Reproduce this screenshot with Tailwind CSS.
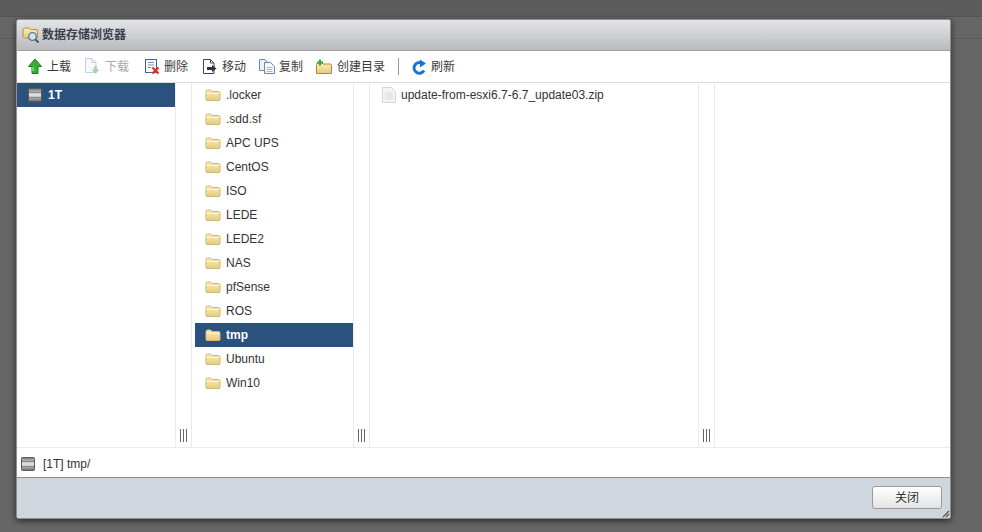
<!DOCTYPE html>
<html lang="en">
<head>
  <meta charset="UTF-8">
  <title>数据存储浏览器</title>
  <script src="https://cdn.jsdelivr.net/npm/@tailwindcss/browser@4"></script>
</head>
<body class="relative w-[982px] h-[532px] overflow-hidden bg-[#666666] font-['Liberation_Sans','Noto_Sans_CJK_SC',sans-serif] text-[12px] text-[#333333]">
  <svg width="0" height="0" class="absolute">
    <defs>
      <linearGradient id="fold" x1="0" y1="0" x2="0" y2="1"><stop offset="0" stop-color="#f8edbd"/><stop offset="1" stop-color="#e6cd7c"/></linearGradient>
      <linearGradient id="disk" x1="0" y1="0" x2="0" y2="1"><stop offset="0" stop-color="#7c7c7c"/><stop offset=".5" stop-color="#e6e6e6"/><stop offset="1" stop-color="#6a6a6a"/></linearGradient>
      <symbol id="folder" viewBox="0 0 16 16"><path d="M1 4.500Q1 3 2.500 3H5.500L7 4.500H13.500Q15 4.500 15 6V12.500Q15 13.500 14 13.500H2Q1 13.500 1 12.500Z" fill="url(#fold)" stroke="#d0b970"/><path d="M1.500 6.500H14.500" stroke="#fbf4d4"/></symbol>
      <symbol id="disk-icon" viewBox="0 0 14 14"><rect x=".5" y=".5" width="13" height="13" rx="1" fill="url(#disk)" stroke="#5a5a5a"/><path d="M1 4.500H13M1 9.500H13" stroke="#8a8a8a"/></symbol>
    </defs>
  </svg>

  <!-- page behind the dialog -->
  <div class="h-[17px] bg-[#5c5c5c] border-b border-[#555555]"></div>
  <div class="h-[22px] border-b border-[#5c5c5c]"></div>

  <div class="absolute left-[16px] top-[19px] w-[935px] h-[500px] flex flex-col border border-[#8f8f8f] rounded-[3px] bg-white shadow-[0_2px_6px_rgba(0,0,0,0.6)]">
    <!-- title -->
    <div class="h-[31px] shrink-0 flex items-center pl-[5px] gap-[2px] bg-gradient-to-b from-[#e4e5e8] to-[#b9babe] border-b border-[#a0a0a0] rounded-t-[2px]">
      <svg width="18" height="18" viewBox="0 0 18 18">
        <path d="M1 4Q1 2 3 2H7L8.500 3.500H14Q15.500 3.500 15.500 5V12H2.500Q1 12 1 10.500Z" fill="url(#fold)" stroke="#b8923c"/>
        <circle cx="10.500" cy="10.500" r="3.800" fill="#cfe4f0" stroke="#5b7689" stroke-width="1.300"/>
        <path d="M13.500 13.500L16.500 16.500" stroke="#3d5566" stroke-width="2"/>
      </svg>
      <span class="font-bold text-[12px] text-[#3c3f4a]">数据存储浏览器</span>
    </div>

    <!-- toolbar -->
    <div class="h-[32px] shrink-0 flex items-center pl-[10px] border-b border-[#dcdcdc] text-[12px] text-[#3a3a3a]">
      <div class="flex items-center gap-[4px] w-[57px]">
        <svg width="16" height="17" viewBox="0 0 16 17"><path d="M8 1L14.500 8.500H11V15.500H5V8.500H1.500Z" fill="#37b030" stroke="#1d7a1e"/><path d="M6 9V13" stroke="#8ee084" stroke-width="1.500"/></svg>
        <span>上载</span>
      </div>
      <div class="flex items-center gap-[4px] w-[60px] text-[#a9a9a9]">
        <svg width="17" height="17" viewBox="0 0 17 17"><path d="M1.500 .5H8L12 4.500V14.500H1.500Z" fill="#f7f9fc" stroke="#c6d0dc"/><path d="M8 .5V4.500H12" fill="none" stroke="#c6d0dc"/><path d="M10 8.500H13V11.500H15.500L11.500 16L7.500 11.500H10Z" fill="#a6d6a6"/></svg>
        <span>下载</span>
      </div>
      <div class="flex items-center gap-[3px] w-[57px]">
        <svg width="17" height="17" viewBox="0 0 17 17"><rect x="1.500" y="1.500" width="11" height="13" fill="#f8fafd" stroke="#48608c"/><path d="M4 4.500H10M4 7H10M4 9.500H7" stroke="#7d8fb0"/><path d="M8.500 9.500L14.500 15.500M14.500 9.500L8.500 15.500" stroke="#d8302a" stroke-width="2.200"/></svg>
        <span>删除</span>
      </div>
      <div class="flex items-center gap-[4px] w-[57px]">
        <svg width="17" height="17" viewBox="0 0 17 17"><path d="M2.500 1.500H9.500L13 5V15.500H2.500Z" fill="#fff" stroke="#444"/><path d="M9.500 1.500V5H13" fill="none" stroke="#444"/><path d="M6 9H11V7L15.500 10.500L11 14V12H6Z" fill="#333"/></svg>
        <span>移动</span>
      </div>
      <div class="flex items-center gap-[3px] w-[57px]">
        <svg width="18" height="17" viewBox="0 0 18 17"><path d="M1.500 1.500H7L9.500 4V12.500H1.500Z" fill="#eef2f8" stroke="#6d86ab"/><path d="M6.500 4.500H12.500L16.500 8.500V15.500H6.500Z" fill="#f8fafd" stroke="#6d86ab"/><path d="M8.500 9.500H14.500M8.500 11.500H14.500M8.500 13.500H14.500" stroke="#a6b6cf"/></svg>
        <span>复制</span>
      </div>
      <div class="flex items-center gap-[4px] w-[83px]">
        <svg width="18" height="16" viewBox="0 0 18 16"><path d="M1.500 5.500Q1.500 4 3 4H7L8 5H15Q16.500 5 16.500 6.500V14.500H1.500Z" fill="url(#fold)" stroke="#a98a36"/><path d="M5 0.500V6.500M2 3.500H8" stroke="#35a534" stroke-width="2"/></svg>
        <span>创建目录</span>
      </div>
      <div class="w-px h-[17px] bg-[#9a9a9a] mr-[13px]"></div>
      <div class="flex items-center gap-[4px]">
        <svg width="15" height="16" viewBox="0 0 15 16"><path d="M12 11.500A5.300 5.300 0 1 1 9.500 4" fill="none" stroke="#1773d6" stroke-width="3"/><path d="M8 0.500L14 4.500L8 8.500Z" fill="#1773d6"/></svg>
        <span>刷新</span>
      </div>
    </div>

    <!-- columns -->
    <div class="flex-1 min-h-0 flex border-b border-[#ebebeb] text-[12px]">
      <div class="w-[158px] shrink-0">
        <div class="h-[24px] flex items-center pl-[11px] gap-[6px] bg-[#2b527e] text-white font-bold">
          <svg width="14" height="14"><use href="#disk-icon"/></svg>
          <span>1T</span>
        </div>
      </div>
      <div class="w-[17px] shrink-0 flex items-end pl-[4px] pb-[5px] border-x border-[#ebebeb]">
        <div class="w-[7px] h-[13px] border-x border-[#666666] flex justify-center"><div class="w-px bg-[#666666]"></div></div>
      </div>
      <div class="w-[161px] shrink-0 pl-[3px]">
        <div class="h-[24px] flex items-center pl-[10px] gap-[5px]"><svg width="16" height="16"><use href="#folder"/></svg><span>.locker</span></div>
        <div class="h-[24px] flex items-center pl-[10px] gap-[5px]"><svg width="16" height="16"><use href="#folder"/></svg><span>.sdd.sf</span></div>
        <div class="h-[24px] flex items-center pl-[10px] gap-[5px]"><svg width="16" height="16"><use href="#folder"/></svg><span>APC UPS</span></div>
        <div class="h-[24px] flex items-center pl-[10px] gap-[5px]"><svg width="16" height="16"><use href="#folder"/></svg><span>CentOS</span></div>
        <div class="h-[24px] flex items-center pl-[10px] gap-[5px]"><svg width="16" height="16"><use href="#folder"/></svg><span>ISO</span></div>
        <div class="h-[24px] flex items-center pl-[10px] gap-[5px]"><svg width="16" height="16"><use href="#folder"/></svg><span>LEDE</span></div>
        <div class="h-[24px] flex items-center pl-[10px] gap-[5px]"><svg width="16" height="16"><use href="#folder"/></svg><span>LEDE2</span></div>
        <div class="h-[24px] flex items-center pl-[10px] gap-[5px]"><svg width="16" height="16"><use href="#folder"/></svg><span>NAS</span></div>
        <div class="h-[24px] flex items-center pl-[10px] gap-[5px]"><svg width="16" height="16"><use href="#folder"/></svg><span>pfSense</span></div>
        <div class="h-[24px] flex items-center pl-[10px] gap-[5px]"><svg width="16" height="16"><use href="#folder"/></svg><span>ROS</span></div>
        <div class="h-[24px] flex items-center pl-[10px] gap-[5px] bg-[#2b527e] text-white font-bold"><svg width="16" height="16"><use href="#folder"/></svg><span>tmp</span></div>
        <div class="h-[24px] flex items-center pl-[10px] gap-[5px]"><svg width="16" height="16"><use href="#folder"/></svg><span>Ubuntu</span></div>
        <div class="h-[24px] flex items-center pl-[10px] gap-[5px]"><svg width="16" height="16"><use href="#folder"/></svg><span>Win10</span></div>
      </div>
      <div class="w-[17px] shrink-0 flex items-end pl-[4px] pb-[5px] border-x border-[#ebebeb]">
        <div class="w-[7px] h-[13px] border-x border-[#666666] flex justify-center"><div class="w-px bg-[#666666]"></div></div>
      </div>
      <div class="w-[328px] shrink-0">
        <div class="h-[24px] flex items-center pl-[12px] gap-[5px]">
          <svg width="14" height="16" viewBox="0 0 14 16"><path d="M.5 .5H9.500L13.500 4.500V15.500H.5Z" fill="#f4f4f4" stroke="#d6d6d6"/><path d="M3 6H11M3 8H11M3 10H11M3 12H11" stroke="#dcdcdc"/></svg>
          <span>update-from-esxi6.7-6.7_update03.zip</span>
        </div>
      </div>
      <div class="w-[17px] shrink-0 flex items-end pl-[4px] pb-[5px] border-x border-[#ebebeb]">
        <div class="w-[7px] h-[13px] border-x border-[#666666] flex justify-center"><div class="w-px bg-[#666666]"></div></div>
      </div>
      <div class="flex-1"></div>
    </div>

    <!-- path -->
    <div class="h-[30px] shrink-0 flex items-center pl-[4px] pt-[2px] gap-[8px] border-b border-[#8f8f8f]">
      <svg width="14" height="14"><use href="#disk-icon"/></svg>
      <span>[1T] tmp/</span>
    </div>

    <!-- footer -->
    <div class="relative h-[40px] shrink-0 flex items-start justify-end pt-[8px] pr-[8px] bg-[#d0d6de] rounded-b-[2px]">
      <button class="w-[70px] h-[23px] rounded-[3px] border border-[#9a9a9a] bg-gradient-to-b from-white to-[#e4e4e4] text-[12px] text-[#333333]">关闭</button>
      <svg class="absolute right-0 bottom-0" width="9" height="9" viewBox="0 0 9 9"><path d="M8 2L2 8M8 5L5 8M8 8H8.010" stroke="#555" stroke-width="1.300"/></svg>
    </div>
  </div>
</body>
</html>
